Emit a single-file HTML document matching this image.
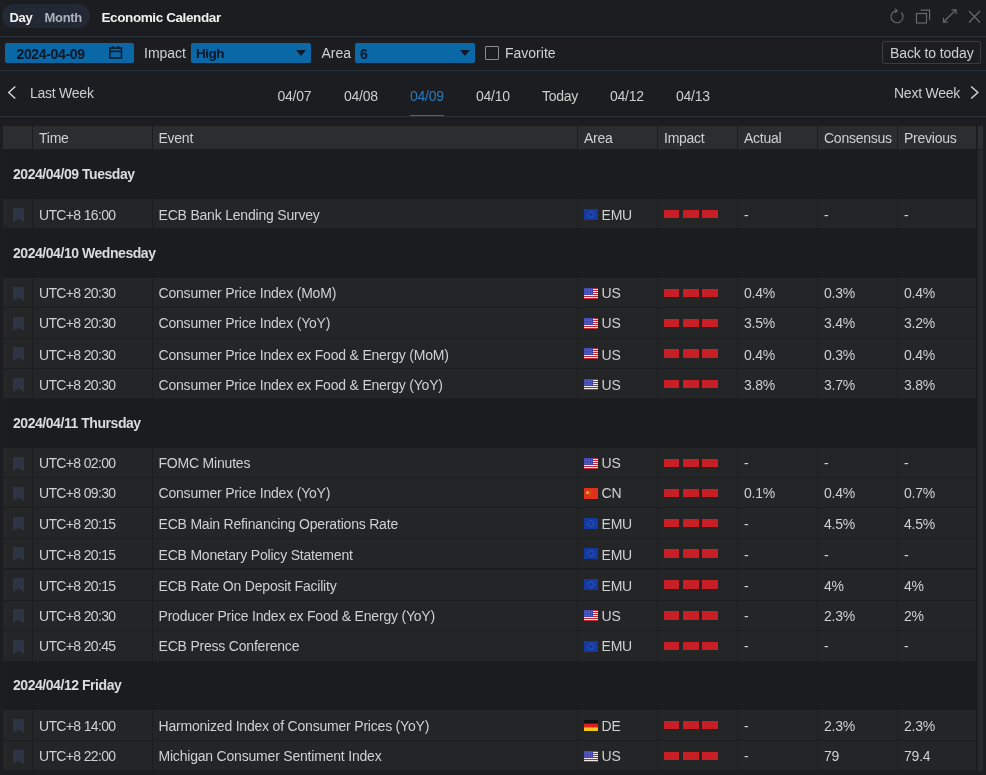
<!DOCTYPE html>
<html><head><meta charset="utf-8">
<style>
html,body{margin:0;padding:0;}
body{width:986px;height:775px;overflow:hidden;will-change:transform;background:#1c1d20;position:relative;font-family:"Liberation Sans", sans-serif;color:#d6d6d6;}
.a{position:absolute;white-space:nowrap;}
.line{position:absolute;left:0;width:986px;height:1px;background:#29313d;}
.pill{position:absolute;left:2px;top:4px;width:88px;height:24px;border-radius:12px;background:#232835;}
.tb{font-size:13px;font-weight:bold;letter-spacing:-0.3px;}
.blue{position:absolute;background:#0a68a6;border-radius:2px;height:20px;top:43px;}
.lbl{font-size:14px;color:#d0d0d0;}
.dk{color:#0a1828;font-size:13.5px;}
.tri{position:absolute;width:0;height:0;border-left:5px solid transparent;border-right:5px solid transparent;border-top:6px solid #0c1a2c;}
.nav{font-size:14px;letter-spacing:-0.25px;color:#cdcdcd;}
.tbl{position:absolute;left:0;top:117px;width:986px;height:658px;}
.hc{position:absolute;top:126px;height:22.5px;background:#2c2d2f;font-size:14px;letter-spacing:-0.25px;color:#cfcfcf;line-height:25px;box-sizing:border-box;padding-left:6px;}
.hc:first-child{}
.gh{position:absolute;left:3px;width:973px;background:#1b1c1e;font-size:14px;letter-spacing:-0.45px;font-weight:bold;color:#dcdcdc;padding-left:10px;box-sizing:border-box;}
.c{position:absolute;background:#242527;font-size:14px;letter-spacing:-0.2px;color:#d0d0d0;line-height:32px;box-sizing:border-box;padding-left:6px;white-space:nowrap;}
.c0{padding-left:0;}
.c1{letter-spacing:-0.65px;}
.bk{position:absolute;left:10px;top:8.5px;}
.flag{position:absolute;left:5.5px;top:9.5px;}
.ar{position:absolute;left:23.5px;}
.t{position:relative;}
.bars{position:absolute;left:6px;top:10.5px;height:8.5px;}
.bars i{position:absolute;top:0;height:8.5px;width:15px;background:#c81e26;}
.bars i:nth-child(1){left:0;}
.bars i:nth-child(2){left:18.5px;width:16px;}
.bars i:nth-child(3){left:37.5px;width:16px;}
.sb{position:absolute;left:977.5px;top:150px;width:5px;height:621px;background:#27292b;}
.sbt{position:absolute;left:977.5px;top:126px;width:5px;height:23px;background:#2c2e30;}
</style></head><body>
<div class="pill"></div>
<div class="a tb" style="left:9.5px;top:10px;color:#f4f4f4;">Day</div>
<div class="a tb" style="left:44.5px;top:10px;color:#aeb2ba;">Month</div>
<div class="a" style="left:101.5px;top:9.6px;font-size:13.5px;letter-spacing:-0.4px;font-weight:bold;color:#f0f0f0;">Economic Calendar</div>
<svg class="a" style="left:885px;top:5px" width="101" height="26" viewBox="885 5 101 26" fill="none" stroke="#66686c" stroke-width="1.2">
  <path d="M901.24 12.46 A6 6 0 1 1 897 10.7"/><path d="M895 8.6 L897.3 10.7 L895 12.8"/>
  <rect x="916.5" y="13.5" width="10" height="9.5"/><path d="M920.5 10.2 H929.6 V19.8"/>
  <path d="M943.5 22 L956 9.8"/><path d="M943.5 17.8 V22.2 H947.8"/><path d="M951.6 9.8 H956 V14.2"/>
  <path d="M969 11 L980 22.5 M980 11 L969 22.5"/>
</svg>
<div class="line" style="top:36px"></div>
<div class="blue" style="left:5px;width:129px;"></div>
<div class="a dk" style="left:16.5px;top:45.5px;font-weight:bold;font-size:14px;letter-spacing:-0.35px;">2024-04-09</div>
<svg class="a" style="left:109px;top:46px" width="14" height="13" viewBox="0 0 14 13" fill="none" stroke="#08131f" stroke-width="1.4"><rect x="0.9" y="2" width="11.6" height="10"/><path d="M1 5.4H12.5" stroke-width="1.5"/><path d="M4 0V2.5M9.5 0V2.5"/></svg>
<div class="a lbl" style="left:144px;top:45px;">Impact</div>
<div class="blue" style="left:191px;width:120px;"></div>
<div class="a dk" style="left:196px;top:45.5px;font-weight:bold;font-size:13.5px;letter-spacing:-0.5px;">High</div>
<div class="tri" style="left:296px;top:50px;"></div>
<div class="a lbl" style="left:321.5px;top:45px;">Area</div>
<div class="blue" style="left:355px;width:120px;"></div>
<div class="a dk" style="left:360px;top:45.5px;font-weight:bold;font-size:14px;">6</div>
<div class="tri" style="left:459.5px;top:50px;"></div>
<div class="a" style="left:485px;top:46px;width:12px;height:12px;border:1.3px solid #8a8c90;border-radius:1px;"></div>
<div class="a lbl" style="left:505px;top:45px;">Favorite</div>
<div class="a" style="left:881.5px;top:41px;width:97px;height:21px;border:1px solid #3a3c40;border-radius:2px;"></div>
<div class="a lbl" style="left:890px;top:45px;letter-spacing:-0.1px;">Back to today</div>
<div class="line" style="top:70px"></div>
<svg class="a" style="left:6px;top:85px" width="12" height="15" viewBox="0 0 12 15" fill="none" stroke="#d8d8d8" stroke-width="1.4"><path d="M9.3 1.6L2.7 7.5L9.3 13.4"/></svg>
<div class="a nav" style="left:30px;top:85px;">Last Week</div>
<div class="a nav" style="left:277.5px;top:87.5px;">04/07</div>
<div class="a nav" style="left:344px;top:87.5px;">04/08</div>
<div class="a nav" style="left:410px;top:87.5px;color:#2b7bb9;">04/09</div>
<div class="a" style="left:409.5px;top:115px;width:34.5px;height:2px;background:#1a6fab;"></div>
<div class="a nav" style="left:476px;top:87.5px;">04/10</div>
<div class="a nav" style="left:542px;top:87.5px;">Today</div>
<div class="a nav" style="left:610px;top:87.5px;">04/12</div>
<div class="a nav" style="left:676px;top:87.5px;">04/13</div>
<div class="a nav" style="left:894px;top:85px;">Next Week</div>
<svg class="a" style="left:968px;top:85px" width="12" height="15" viewBox="0 0 12 15" fill="none" stroke="#d8d8d8" stroke-width="1.4"><path d="M3.2 1.6L9.8 7.5L3.2 13.4"/></svg>
<div class="line" style="top:116px"></div>
<div class="hc" style="left:3px;width:29px"></div>
<div class="hc" style="left:33px;width:118.5px">Time</div>
<div class="hc" style="left:152.5px;width:424.0px">Event</div>
<div class="hc" style="left:578px;width:78.5px">Area</div>
<div class="hc" style="left:658px;width:78.5px">Impact</div>
<div class="hc" style="left:738px;width:78.5px">Actual</div>
<div class="hc" style="left:818px;width:78.5px">Consensus</div>
<div class="hc" style="left:898px;width:78px">Previous</div>
<div class="gh" style="top:150px;height:48px;line-height:48px"><span class="t" style="top:-0.4px">2024/04/09 Tuesday</span></div>
<div class="c c0" style="left:3px;top:199px;width:29px;height:29px"><svg class="bk" width="11" height="14" viewBox="0 0 11 14"><path d="M0 0H11V14.2L5.5 10.8L0 14.2Z" fill="#2d3443"/></svg></div>
<div class="c c1" style="left:33px;top:199px;width:118.5px;height:29px"><span class="t" style="top:0.0px">UTC+8 16:00</span></div>
<div class="c c2" style="left:152.5px;top:199px;width:424.0px;height:29px"><span class="t" style="top:0.0px">ECB Bank Lending Survey</span></div>
<div class="c c3" style="left:578px;top:199px;width:78.5px;height:29px"><svg class="flag" width="14" height="11" viewBox="0 0 14 11"><rect width="14" height="11" fill="#123aa0"/><circle cx="7" cy="5.5" r="3" fill="none" stroke="#6a7fc8" stroke-width="0.8" stroke-dasharray="0.8 0.8"/></svg><span class="ar" style="top:0.0px">EMU</span></div>
<div class="c c4" style="left:658px;top:199px;width:78.5px;height:29px"><div class="bars"><i></i><i></i><i></i></div></div>
<div class="c c5" style="left:738px;top:199px;width:78.5px;height:29px"><span class="t" style="top:0.0px">-</span></div>
<div class="c c6" style="left:818px;top:199px;width:78.5px;height:29px"><span class="t" style="top:0.0px">-</span></div>
<div class="c c7" style="left:898px;top:199px;width:78px;height:29px"><span class="t" style="top:0.0px">-</span></div>
<div class="gh" style="top:229.5px;height:47.5px;line-height:48px"><span class="t" style="top:-0.6px">2024/04/10 Wednesday</span></div>
<div class="c c0" style="left:3px;top:278px;width:29px;height:29px"><svg class="bk" width="11" height="14" viewBox="0 0 11 14"><path d="M0 0H11V14.2L5.5 10.8L0 14.2Z" fill="#2d3443"/></svg></div>
<div class="c c1" style="left:33px;top:278px;width:118.5px;height:29px"><span class="t" style="top:-0.7px">UTC+8 20:30</span></div>
<div class="c c2" style="left:152.5px;top:278px;width:424.0px;height:29px"><span class="t" style="top:-0.7px">Consumer Price Index (MoM)</span></div>
<div class="c c3" style="left:578px;top:278px;width:78.5px;height:29px"><svg class="flag" width="14" height="11" viewBox="0 0 14 11"><rect width="14" height="11" fill="#f3e4e8"/><rect x="0" y="0" width="14" height="1" fill="#b82a34"/><rect x="0" y="2" width="14" height="1" fill="#b82a34"/><rect x="0" y="4" width="14" height="1" fill="#b82a34"/><rect x="0" y="6" width="14" height="1" fill="#b82a34"/><rect x="0" y="8" width="14" height="1" fill="#b82a34"/><rect x="0" y="10" width="14" height="1" fill="#b82a34"/><rect width="9" height="7" fill="#3d44b0"/><circle cx="1.0" cy="1.0" r="0.35" fill="#c8ccf0"/><circle cx="1.0" cy="2.5" r="0.35" fill="#c8ccf0"/><circle cx="1.0" cy="4.0" r="0.35" fill="#c8ccf0"/><circle cx="1.0" cy="5.5" r="0.35" fill="#c8ccf0"/><circle cx="2.6" cy="1.0" r="0.35" fill="#c8ccf0"/><circle cx="2.6" cy="2.5" r="0.35" fill="#c8ccf0"/><circle cx="2.6" cy="4.0" r="0.35" fill="#c8ccf0"/><circle cx="2.6" cy="5.5" r="0.35" fill="#c8ccf0"/><circle cx="4.2" cy="1.0" r="0.35" fill="#c8ccf0"/><circle cx="4.2" cy="2.5" r="0.35" fill="#c8ccf0"/><circle cx="4.2" cy="4.0" r="0.35" fill="#c8ccf0"/><circle cx="4.2" cy="5.5" r="0.35" fill="#c8ccf0"/><circle cx="5.8" cy="1.0" r="0.35" fill="#c8ccf0"/><circle cx="5.8" cy="2.5" r="0.35" fill="#c8ccf0"/><circle cx="5.8" cy="4.0" r="0.35" fill="#c8ccf0"/><circle cx="5.8" cy="5.5" r="0.35" fill="#c8ccf0"/><circle cx="7.4" cy="1.0" r="0.35" fill="#c8ccf0"/><circle cx="7.4" cy="2.5" r="0.35" fill="#c8ccf0"/><circle cx="7.4" cy="4.0" r="0.35" fill="#c8ccf0"/><circle cx="7.4" cy="5.5" r="0.35" fill="#c8ccf0"/></svg><span class="ar" style="top:-0.7px">US</span></div>
<div class="c c4" style="left:658px;top:278px;width:78.5px;height:29px"><div class="bars"><i></i><i></i><i></i></div></div>
<div class="c c5" style="left:738px;top:278px;width:78.5px;height:29px"><span class="t" style="top:-0.7px">0.4%</span></div>
<div class="c c6" style="left:818px;top:278px;width:78.5px;height:29px"><span class="t" style="top:-0.7px">0.3%</span></div>
<div class="c c7" style="left:898px;top:278px;width:78px;height:29px"><span class="t" style="top:-0.7px">0.4%</span></div>
<div class="c c0" style="left:3px;top:308px;width:29px;height:29.5px"><svg class="bk" width="11" height="14" viewBox="0 0 11 14"><path d="M0 0H11V14.2L5.5 10.8L0 14.2Z" fill="#2d3443"/></svg></div>
<div class="c c1" style="left:33px;top:308px;width:118.5px;height:29.5px"><span class="t" style="top:-0.7px">UTC+8 20:30</span></div>
<div class="c c2" style="left:152.5px;top:308px;width:424.0px;height:29.5px"><span class="t" style="top:-0.7px">Consumer Price Index (YoY)</span></div>
<div class="c c3" style="left:578px;top:308px;width:78.5px;height:29.5px"><svg class="flag" width="14" height="11" viewBox="0 0 14 11"><rect width="14" height="11" fill="#f3e4e8"/><rect x="0" y="0" width="14" height="1" fill="#b82a34"/><rect x="0" y="2" width="14" height="1" fill="#b82a34"/><rect x="0" y="4" width="14" height="1" fill="#b82a34"/><rect x="0" y="6" width="14" height="1" fill="#b82a34"/><rect x="0" y="8" width="14" height="1" fill="#b82a34"/><rect x="0" y="10" width="14" height="1" fill="#b82a34"/><rect width="9" height="7" fill="#3d44b0"/><circle cx="1.0" cy="1.0" r="0.35" fill="#c8ccf0"/><circle cx="1.0" cy="2.5" r="0.35" fill="#c8ccf0"/><circle cx="1.0" cy="4.0" r="0.35" fill="#c8ccf0"/><circle cx="1.0" cy="5.5" r="0.35" fill="#c8ccf0"/><circle cx="2.6" cy="1.0" r="0.35" fill="#c8ccf0"/><circle cx="2.6" cy="2.5" r="0.35" fill="#c8ccf0"/><circle cx="2.6" cy="4.0" r="0.35" fill="#c8ccf0"/><circle cx="2.6" cy="5.5" r="0.35" fill="#c8ccf0"/><circle cx="4.2" cy="1.0" r="0.35" fill="#c8ccf0"/><circle cx="4.2" cy="2.5" r="0.35" fill="#c8ccf0"/><circle cx="4.2" cy="4.0" r="0.35" fill="#c8ccf0"/><circle cx="4.2" cy="5.5" r="0.35" fill="#c8ccf0"/><circle cx="5.8" cy="1.0" r="0.35" fill="#c8ccf0"/><circle cx="5.8" cy="2.5" r="0.35" fill="#c8ccf0"/><circle cx="5.8" cy="4.0" r="0.35" fill="#c8ccf0"/><circle cx="5.8" cy="5.5" r="0.35" fill="#c8ccf0"/><circle cx="7.4" cy="1.0" r="0.35" fill="#c8ccf0"/><circle cx="7.4" cy="2.5" r="0.35" fill="#c8ccf0"/><circle cx="7.4" cy="4.0" r="0.35" fill="#c8ccf0"/><circle cx="7.4" cy="5.5" r="0.35" fill="#c8ccf0"/></svg><span class="ar" style="top:-0.7px">US</span></div>
<div class="c c4" style="left:658px;top:308px;width:78.5px;height:29.5px"><div class="bars"><i></i><i></i><i></i></div></div>
<div class="c c5" style="left:738px;top:308px;width:78.5px;height:29.5px"><span class="t" style="top:-0.7px">3.5%</span></div>
<div class="c c6" style="left:818px;top:308px;width:78.5px;height:29.5px"><span class="t" style="top:-0.7px">3.4%</span></div>
<div class="c c7" style="left:898px;top:308px;width:78px;height:29.5px"><span class="t" style="top:-0.7px">3.2%</span></div>
<div class="c c0" style="left:3px;top:338.5px;width:29px;height:29.5px"><svg class="bk" width="11" height="14" viewBox="0 0 11 14"><path d="M0 0H11V14.2L5.5 10.8L0 14.2Z" fill="#2d3443"/></svg></div>
<div class="c c1" style="left:33px;top:338.5px;width:118.5px;height:29.5px"><span class="t" style="top:0.5px">UTC+8 20:30</span></div>
<div class="c c2" style="left:152.5px;top:338.5px;width:424.0px;height:29.5px"><span class="t" style="top:0.5px">Consumer Price Index ex Food &amp; Energy (MoM)</span></div>
<div class="c c3" style="left:578px;top:338.5px;width:78.5px;height:29.5px"><svg class="flag" width="14" height="11" viewBox="0 0 14 11"><rect width="14" height="11" fill="#f3e4e8"/><rect x="0" y="0" width="14" height="1" fill="#b82a34"/><rect x="0" y="2" width="14" height="1" fill="#b82a34"/><rect x="0" y="4" width="14" height="1" fill="#b82a34"/><rect x="0" y="6" width="14" height="1" fill="#b82a34"/><rect x="0" y="8" width="14" height="1" fill="#b82a34"/><rect x="0" y="10" width="14" height="1" fill="#b82a34"/><rect width="9" height="7" fill="#3d44b0"/><circle cx="1.0" cy="1.0" r="0.35" fill="#c8ccf0"/><circle cx="1.0" cy="2.5" r="0.35" fill="#c8ccf0"/><circle cx="1.0" cy="4.0" r="0.35" fill="#c8ccf0"/><circle cx="1.0" cy="5.5" r="0.35" fill="#c8ccf0"/><circle cx="2.6" cy="1.0" r="0.35" fill="#c8ccf0"/><circle cx="2.6" cy="2.5" r="0.35" fill="#c8ccf0"/><circle cx="2.6" cy="4.0" r="0.35" fill="#c8ccf0"/><circle cx="2.6" cy="5.5" r="0.35" fill="#c8ccf0"/><circle cx="4.2" cy="1.0" r="0.35" fill="#c8ccf0"/><circle cx="4.2" cy="2.5" r="0.35" fill="#c8ccf0"/><circle cx="4.2" cy="4.0" r="0.35" fill="#c8ccf0"/><circle cx="4.2" cy="5.5" r="0.35" fill="#c8ccf0"/><circle cx="5.8" cy="1.0" r="0.35" fill="#c8ccf0"/><circle cx="5.8" cy="2.5" r="0.35" fill="#c8ccf0"/><circle cx="5.8" cy="4.0" r="0.35" fill="#c8ccf0"/><circle cx="5.8" cy="5.5" r="0.35" fill="#c8ccf0"/><circle cx="7.4" cy="1.0" r="0.35" fill="#c8ccf0"/><circle cx="7.4" cy="2.5" r="0.35" fill="#c8ccf0"/><circle cx="7.4" cy="4.0" r="0.35" fill="#c8ccf0"/><circle cx="7.4" cy="5.5" r="0.35" fill="#c8ccf0"/></svg><span class="ar" style="top:0.5px">US</span></div>
<div class="c c4" style="left:658px;top:338.5px;width:78.5px;height:29.5px"><div class="bars"><i></i><i></i><i></i></div></div>
<div class="c c5" style="left:738px;top:338.5px;width:78.5px;height:29.5px"><span class="t" style="top:0.5px">0.4%</span></div>
<div class="c c6" style="left:818px;top:338.5px;width:78.5px;height:29.5px"><span class="t" style="top:0.5px">0.3%</span></div>
<div class="c c7" style="left:898px;top:338.5px;width:78px;height:29.5px"><span class="t" style="top:0.5px">0.4%</span></div>
<div class="c c0" style="left:3px;top:369px;width:29px;height:29px"><svg class="bk" width="11" height="14" viewBox="0 0 11 14"><path d="M0 0H11V14.2L5.5 10.8L0 14.2Z" fill="#2d3443"/></svg></div>
<div class="c c1" style="left:33px;top:369px;width:118.5px;height:29px"><span class="t" style="top:0.0px">UTC+8 20:30</span></div>
<div class="c c2" style="left:152.5px;top:369px;width:424.0px;height:29px"><span class="t" style="top:0.0px">Consumer Price Index ex Food &amp; Energy (YoY)</span></div>
<div class="c c3" style="left:578px;top:369px;width:78.5px;height:29px"><svg class="flag" width="14" height="11" viewBox="0 0 14 11"><rect width="14" height="11" fill="#f3e4e8"/><rect x="0" y="0" width="14" height="1" fill="#b82a34"/><rect x="0" y="2" width="14" height="1" fill="#b82a34"/><rect x="0" y="4" width="14" height="1" fill="#b82a34"/><rect x="0" y="6" width="14" height="1" fill="#b82a34"/><rect x="0" y="8" width="14" height="1" fill="#b82a34"/><rect x="0" y="10" width="14" height="1" fill="#b82a34"/><rect width="9" height="7" fill="#3d44b0"/><circle cx="1.0" cy="1.0" r="0.35" fill="#c8ccf0"/><circle cx="1.0" cy="2.5" r="0.35" fill="#c8ccf0"/><circle cx="1.0" cy="4.0" r="0.35" fill="#c8ccf0"/><circle cx="1.0" cy="5.5" r="0.35" fill="#c8ccf0"/><circle cx="2.6" cy="1.0" r="0.35" fill="#c8ccf0"/><circle cx="2.6" cy="2.5" r="0.35" fill="#c8ccf0"/><circle cx="2.6" cy="4.0" r="0.35" fill="#c8ccf0"/><circle cx="2.6" cy="5.5" r="0.35" fill="#c8ccf0"/><circle cx="4.2" cy="1.0" r="0.35" fill="#c8ccf0"/><circle cx="4.2" cy="2.5" r="0.35" fill="#c8ccf0"/><circle cx="4.2" cy="4.0" r="0.35" fill="#c8ccf0"/><circle cx="4.2" cy="5.5" r="0.35" fill="#c8ccf0"/><circle cx="5.8" cy="1.0" r="0.35" fill="#c8ccf0"/><circle cx="5.8" cy="2.5" r="0.35" fill="#c8ccf0"/><circle cx="5.8" cy="4.0" r="0.35" fill="#c8ccf0"/><circle cx="5.8" cy="5.5" r="0.35" fill="#c8ccf0"/><circle cx="7.4" cy="1.0" r="0.35" fill="#c8ccf0"/><circle cx="7.4" cy="2.5" r="0.35" fill="#c8ccf0"/><circle cx="7.4" cy="4.0" r="0.35" fill="#c8ccf0"/><circle cx="7.4" cy="5.5" r="0.35" fill="#c8ccf0"/></svg><span class="ar" style="top:0.0px">US</span></div>
<div class="c c4" style="left:658px;top:369px;width:78.5px;height:29px"><div class="bars"><i></i><i></i><i></i></div></div>
<div class="c c5" style="left:738px;top:369px;width:78.5px;height:29px"><span class="t" style="top:0.0px">3.8%</span></div>
<div class="c c6" style="left:818px;top:369px;width:78.5px;height:29px"><span class="t" style="top:0.0px">3.7%</span></div>
<div class="c c7" style="left:898px;top:369px;width:78px;height:29px"><span class="t" style="top:0.0px">3.8%</span></div>
<div class="gh" style="top:400px;height:47px;line-height:48px"><span class="t" style="top:-1.1px">2024/04/11 Thursday</span></div>
<div class="c c0" style="left:3px;top:448px;width:29px;height:29px"><svg class="bk" width="11" height="14" viewBox="0 0 11 14"><path d="M0 0H11V14.2L5.5 10.8L0 14.2Z" fill="#2d3443"/></svg></div>
<div class="c c1" style="left:33px;top:448px;width:118.5px;height:29px"><span class="t" style="top:-0.7px">UTC+8 02:00</span></div>
<div class="c c2" style="left:152.5px;top:448px;width:424.0px;height:29px"><span class="t" style="top:-0.7px">FOMC Minutes</span></div>
<div class="c c3" style="left:578px;top:448px;width:78.5px;height:29px"><svg class="flag" width="14" height="11" viewBox="0 0 14 11"><rect width="14" height="11" fill="#f3e4e8"/><rect x="0" y="0" width="14" height="1" fill="#b82a34"/><rect x="0" y="2" width="14" height="1" fill="#b82a34"/><rect x="0" y="4" width="14" height="1" fill="#b82a34"/><rect x="0" y="6" width="14" height="1" fill="#b82a34"/><rect x="0" y="8" width="14" height="1" fill="#b82a34"/><rect x="0" y="10" width="14" height="1" fill="#b82a34"/><rect width="9" height="7" fill="#3d44b0"/><circle cx="1.0" cy="1.0" r="0.35" fill="#c8ccf0"/><circle cx="1.0" cy="2.5" r="0.35" fill="#c8ccf0"/><circle cx="1.0" cy="4.0" r="0.35" fill="#c8ccf0"/><circle cx="1.0" cy="5.5" r="0.35" fill="#c8ccf0"/><circle cx="2.6" cy="1.0" r="0.35" fill="#c8ccf0"/><circle cx="2.6" cy="2.5" r="0.35" fill="#c8ccf0"/><circle cx="2.6" cy="4.0" r="0.35" fill="#c8ccf0"/><circle cx="2.6" cy="5.5" r="0.35" fill="#c8ccf0"/><circle cx="4.2" cy="1.0" r="0.35" fill="#c8ccf0"/><circle cx="4.2" cy="2.5" r="0.35" fill="#c8ccf0"/><circle cx="4.2" cy="4.0" r="0.35" fill="#c8ccf0"/><circle cx="4.2" cy="5.5" r="0.35" fill="#c8ccf0"/><circle cx="5.8" cy="1.0" r="0.35" fill="#c8ccf0"/><circle cx="5.8" cy="2.5" r="0.35" fill="#c8ccf0"/><circle cx="5.8" cy="4.0" r="0.35" fill="#c8ccf0"/><circle cx="5.8" cy="5.5" r="0.35" fill="#c8ccf0"/><circle cx="7.4" cy="1.0" r="0.35" fill="#c8ccf0"/><circle cx="7.4" cy="2.5" r="0.35" fill="#c8ccf0"/><circle cx="7.4" cy="4.0" r="0.35" fill="#c8ccf0"/><circle cx="7.4" cy="5.5" r="0.35" fill="#c8ccf0"/></svg><span class="ar" style="top:-0.7px">US</span></div>
<div class="c c4" style="left:658px;top:448px;width:78.5px;height:29px"><div class="bars"><i></i><i></i><i></i></div></div>
<div class="c c5" style="left:738px;top:448px;width:78.5px;height:29px"><span class="t" style="top:-0.7px">-</span></div>
<div class="c c6" style="left:818px;top:448px;width:78.5px;height:29px"><span class="t" style="top:-0.7px">-</span></div>
<div class="c c7" style="left:898px;top:448px;width:78px;height:29px"><span class="t" style="top:-0.7px">-</span></div>
<div class="c c0" style="left:3px;top:478px;width:29px;height:29.3px"><svg class="bk" width="11" height="14" viewBox="0 0 11 14"><path d="M0 0H11V14.2L5.5 10.8L0 14.2Z" fill="#2d3443"/></svg></div>
<div class="c c1" style="left:33px;top:478px;width:118.5px;height:29.3px"><span class="t" style="top:-0.7px">UTC+8 09:30</span></div>
<div class="c c2" style="left:152.5px;top:478px;width:424.0px;height:29.3px"><span class="t" style="top:-0.7px">Consumer Price Index (YoY)</span></div>
<div class="c c3" style="left:578px;top:478px;width:78.5px;height:29.3px"><svg class="flag" width="14" height="11" viewBox="0 0 14 11"><rect width="14" height="11" fill="#e0301e"/><circle cx="3.5" cy="4.5" r="1.5" fill="#f5b020"/><circle cx="6" cy="2.5" r="0.5" fill="#f08030"/><circle cx="6.5" cy="4.5" r="0.5" fill="#f08030"/><circle cx="6" cy="6.5" r="0.5" fill="#f08030"/></svg><span class="ar" style="top:-0.7px">CN</span></div>
<div class="c c4" style="left:658px;top:478px;width:78.5px;height:29.3px"><div class="bars"><i></i><i></i><i></i></div></div>
<div class="c c5" style="left:738px;top:478px;width:78.5px;height:29.3px"><span class="t" style="top:-0.7px">0.1%</span></div>
<div class="c c6" style="left:818px;top:478px;width:78.5px;height:29.3px"><span class="t" style="top:-0.7px">0.4%</span></div>
<div class="c c7" style="left:898px;top:478px;width:78px;height:29.3px"><span class="t" style="top:-0.7px">0.7%</span></div>
<div class="c c0" style="left:3px;top:508.3px;width:29px;height:29.4px"><svg class="bk" width="11" height="14" viewBox="0 0 11 14"><path d="M0 0H11V14.2L5.5 10.8L0 14.2Z" fill="#2d3443"/></svg></div>
<div class="c c1" style="left:33px;top:508.3px;width:118.5px;height:29.4px"><span class="t" style="top:0.2px">UTC+8 20:15</span></div>
<div class="c c2" style="left:152.5px;top:508.3px;width:424.0px;height:29.4px"><span class="t" style="top:0.2px">ECB Main Refinancing Operations Rate</span></div>
<div class="c c3" style="left:578px;top:508.3px;width:78.5px;height:29.4px"><svg class="flag" width="14" height="11" viewBox="0 0 14 11"><rect width="14" height="11" fill="#123aa0"/><circle cx="7" cy="5.5" r="3" fill="none" stroke="#6a7fc8" stroke-width="0.8" stroke-dasharray="0.8 0.8"/></svg><span class="ar" style="top:0.2px">EMU</span></div>
<div class="c c4" style="left:658px;top:508.3px;width:78.5px;height:29.4px"><div class="bars"><i></i><i></i><i></i></div></div>
<div class="c c5" style="left:738px;top:508.3px;width:78.5px;height:29.4px"><span class="t" style="top:0.2px">-</span></div>
<div class="c c6" style="left:818px;top:508.3px;width:78.5px;height:29.4px"><span class="t" style="top:0.2px">4.5%</span></div>
<div class="c c7" style="left:898px;top:508.3px;width:78px;height:29.4px"><span class="t" style="top:0.2px">4.5%</span></div>
<div class="c c0" style="left:3px;top:538.7px;width:29px;height:29.8px"><svg class="bk" width="11" height="14" viewBox="0 0 11 14"><path d="M0 0H11V14.2L5.5 10.8L0 14.2Z" fill="#2d3443"/></svg></div>
<div class="c c1" style="left:33px;top:538.7px;width:118.5px;height:29.8px"><span class="t" style="top:0.3px">UTC+8 20:15</span></div>
<div class="c c2" style="left:152.5px;top:538.7px;width:424.0px;height:29.8px"><span class="t" style="top:0.3px">ECB Monetary Policy Statement</span></div>
<div class="c c3" style="left:578px;top:538.7px;width:78.5px;height:29.8px"><svg class="flag" width="14" height="11" viewBox="0 0 14 11"><rect width="14" height="11" fill="#123aa0"/><circle cx="7" cy="5.5" r="3" fill="none" stroke="#6a7fc8" stroke-width="0.8" stroke-dasharray="0.8 0.8"/></svg><span class="ar" style="top:0.3px">EMU</span></div>
<div class="c c4" style="left:658px;top:538.7px;width:78.5px;height:29.8px"><div class="bars"><i></i><i></i><i></i></div></div>
<div class="c c5" style="left:738px;top:538.7px;width:78.5px;height:29.8px"><span class="t" style="top:0.3px">-</span></div>
<div class="c c6" style="left:818px;top:538.7px;width:78.5px;height:29.8px"><span class="t" style="top:0.3px">-</span></div>
<div class="c c7" style="left:898px;top:538.7px;width:78px;height:29.8px"><span class="t" style="top:0.3px">-</span></div>
<div class="c c0" style="left:3px;top:569.5px;width:29px;height:30.0px"><svg class="bk" width="11" height="14" viewBox="0 0 11 14"><path d="M0 0H11V14.2L5.5 10.8L0 14.2Z" fill="#2d3443"/></svg></div>
<div class="c c1" style="left:33px;top:569.5px;width:118.5px;height:30.0px"><span class="t" style="top:0.3px">UTC+8 20:15</span></div>
<div class="c c2" style="left:152.5px;top:569.5px;width:424.0px;height:30.0px"><span class="t" style="top:0.3px">ECB Rate On Deposit Facility</span></div>
<div class="c c3" style="left:578px;top:569.5px;width:78.5px;height:30.0px"><svg class="flag" width="14" height="11" viewBox="0 0 14 11"><rect width="14" height="11" fill="#123aa0"/><circle cx="7" cy="5.5" r="3" fill="none" stroke="#6a7fc8" stroke-width="0.8" stroke-dasharray="0.8 0.8"/></svg><span class="ar" style="top:0.3px">EMU</span></div>
<div class="c c4" style="left:658px;top:569.5px;width:78.5px;height:30.0px"><div class="bars"><i></i><i></i><i></i></div></div>
<div class="c c5" style="left:738px;top:569.5px;width:78.5px;height:30.0px"><span class="t" style="top:0.3px">-</span></div>
<div class="c c6" style="left:818px;top:569.5px;width:78.5px;height:30.0px"><span class="t" style="top:0.3px">4%</span></div>
<div class="c c7" style="left:898px;top:569.5px;width:78px;height:30.0px"><span class="t" style="top:0.3px">4%</span></div>
<div class="c c0" style="left:3px;top:600.5px;width:29px;height:29.8px"><svg class="bk" width="11" height="14" viewBox="0 0 11 14"><path d="M0 0H11V14.2L5.5 10.8L0 14.2Z" fill="#2d3443"/></svg></div>
<div class="c c1" style="left:33px;top:600.5px;width:118.5px;height:29.8px"><span class="t" style="top:-0.5px">UTC+8 20:30</span></div>
<div class="c c2" style="left:152.5px;top:600.5px;width:424.0px;height:29.8px"><span class="t" style="top:-0.5px">Producer Price Index ex Food &amp; Energy (YoY)</span></div>
<div class="c c3" style="left:578px;top:600.5px;width:78.5px;height:29.8px"><svg class="flag" width="14" height="11" viewBox="0 0 14 11"><rect width="14" height="11" fill="#f3e4e8"/><rect x="0" y="0" width="14" height="1" fill="#b82a34"/><rect x="0" y="2" width="14" height="1" fill="#b82a34"/><rect x="0" y="4" width="14" height="1" fill="#b82a34"/><rect x="0" y="6" width="14" height="1" fill="#b82a34"/><rect x="0" y="8" width="14" height="1" fill="#b82a34"/><rect x="0" y="10" width="14" height="1" fill="#b82a34"/><rect width="9" height="7" fill="#3d44b0"/><circle cx="1.0" cy="1.0" r="0.35" fill="#c8ccf0"/><circle cx="1.0" cy="2.5" r="0.35" fill="#c8ccf0"/><circle cx="1.0" cy="4.0" r="0.35" fill="#c8ccf0"/><circle cx="1.0" cy="5.5" r="0.35" fill="#c8ccf0"/><circle cx="2.6" cy="1.0" r="0.35" fill="#c8ccf0"/><circle cx="2.6" cy="2.5" r="0.35" fill="#c8ccf0"/><circle cx="2.6" cy="4.0" r="0.35" fill="#c8ccf0"/><circle cx="2.6" cy="5.5" r="0.35" fill="#c8ccf0"/><circle cx="4.2" cy="1.0" r="0.35" fill="#c8ccf0"/><circle cx="4.2" cy="2.5" r="0.35" fill="#c8ccf0"/><circle cx="4.2" cy="4.0" r="0.35" fill="#c8ccf0"/><circle cx="4.2" cy="5.5" r="0.35" fill="#c8ccf0"/><circle cx="5.8" cy="1.0" r="0.35" fill="#c8ccf0"/><circle cx="5.8" cy="2.5" r="0.35" fill="#c8ccf0"/><circle cx="5.8" cy="4.0" r="0.35" fill="#c8ccf0"/><circle cx="5.8" cy="5.5" r="0.35" fill="#c8ccf0"/><circle cx="7.4" cy="1.0" r="0.35" fill="#c8ccf0"/><circle cx="7.4" cy="2.5" r="0.35" fill="#c8ccf0"/><circle cx="7.4" cy="4.0" r="0.35" fill="#c8ccf0"/><circle cx="7.4" cy="5.5" r="0.35" fill="#c8ccf0"/></svg><span class="ar" style="top:-0.5px">US</span></div>
<div class="c c4" style="left:658px;top:600.5px;width:78.5px;height:29.8px"><div class="bars"><i></i><i></i><i></i></div></div>
<div class="c c5" style="left:738px;top:600.5px;width:78.5px;height:29.8px"><span class="t" style="top:-0.5px">-</span></div>
<div class="c c6" style="left:818px;top:600.5px;width:78.5px;height:29.8px"><span class="t" style="top:-0.5px">2.3%</span></div>
<div class="c c7" style="left:898px;top:600.5px;width:78px;height:29.8px"><span class="t" style="top:-0.5px">2%</span></div>
<div class="c c0" style="left:3px;top:631.3px;width:29px;height:29.7px"><svg class="bk" width="11" height="14" viewBox="0 0 11 14"><path d="M0 0H11V14.2L5.5 10.8L0 14.2Z" fill="#2d3443"/></svg></div>
<div class="c c1" style="left:33px;top:631.3px;width:118.5px;height:29.7px"><span class="t" style="top:-1.1px">UTC+8 20:45</span></div>
<div class="c c2" style="left:152.5px;top:631.3px;width:424.0px;height:29.7px"><span class="t" style="top:-1.1px">ECB Press Conference</span></div>
<div class="c c3" style="left:578px;top:631.3px;width:78.5px;height:29.7px"><svg class="flag" width="14" height="11" viewBox="0 0 14 11"><rect width="14" height="11" fill="#123aa0"/><circle cx="7" cy="5.5" r="3" fill="none" stroke="#6a7fc8" stroke-width="0.8" stroke-dasharray="0.8 0.8"/></svg><span class="ar" style="top:-1.1px">EMU</span></div>
<div class="c c4" style="left:658px;top:631.3px;width:78.5px;height:29.7px"><div class="bars"><i></i><i></i><i></i></div></div>
<div class="c c5" style="left:738px;top:631.3px;width:78.5px;height:29.7px"><span class="t" style="top:-1.1px">-</span></div>
<div class="c c6" style="left:818px;top:631.3px;width:78.5px;height:29.7px"><span class="t" style="top:-1.1px">-</span></div>
<div class="c c7" style="left:898px;top:631.3px;width:78px;height:29.7px"><span class="t" style="top:-1.1px">-</span></div>
<div class="gh" style="top:661.5px;height:47.5px;line-height:48px"><span class="t" style="top:-0.3px">2024/04/12 Friday</span></div>
<div class="c c0" style="left:3px;top:710px;width:29px;height:30px"><svg class="bk" width="11" height="14" viewBox="0 0 11 14"><path d="M0 0H11V14.2L5.5 10.8L0 14.2Z" fill="#2d3443"/></svg></div>
<div class="c c1" style="left:33px;top:710px;width:118.5px;height:30px"><span class="t" style="top:-0.4px">UTC+8 14:00</span></div>
<div class="c c2" style="left:152.5px;top:710px;width:424.0px;height:30px"><span class="t" style="top:-0.4px">Harmonized Index of Consumer Prices (YoY)</span></div>
<div class="c c3" style="left:578px;top:710px;width:78.5px;height:30px"><svg class="flag" width="14" height="11" viewBox="0 0 14 11"><rect width="14" height="3.67" fill="#111"/><rect y="3.67" width="14" height="3.67" fill="#dd1f1f"/><rect y="7.33" width="14" height="3.67" fill="#f2c61a"/></svg><span class="ar" style="top:-0.4px">DE</span></div>
<div class="c c4" style="left:658px;top:710px;width:78.5px;height:30px"><div class="bars"><i></i><i></i><i></i></div></div>
<div class="c c5" style="left:738px;top:710px;width:78.5px;height:30px"><span class="t" style="top:-0.4px">-</span></div>
<div class="c c6" style="left:818px;top:710px;width:78.5px;height:30px"><span class="t" style="top:-0.4px">2.3%</span></div>
<div class="c c7" style="left:898px;top:710px;width:78px;height:30px"><span class="t" style="top:-0.4px">2.3%</span></div>
<div class="c c0" style="left:3px;top:741px;width:29px;height:28.5px"><svg class="bk" width="11" height="14" viewBox="0 0 11 14"><path d="M0 0H11V14.2L5.5 10.8L0 14.2Z" fill="#2d3443"/></svg></div>
<div class="c c1" style="left:33px;top:741px;width:118.5px;height:28.5px"><span class="t" style="top:-1.2px">UTC+8 22:00</span></div>
<div class="c c2" style="left:152.5px;top:741px;width:424.0px;height:28.5px"><span class="t" style="top:-1.2px">Michigan Consumer Sentiment Index</span></div>
<div class="c c3" style="left:578px;top:741px;width:78.5px;height:28.5px"><svg class="flag" width="14" height="11" viewBox="0 0 14 11"><rect width="14" height="11" fill="#f3e4e8"/><rect x="0" y="0" width="14" height="1" fill="#b82a34"/><rect x="0" y="2" width="14" height="1" fill="#b82a34"/><rect x="0" y="4" width="14" height="1" fill="#b82a34"/><rect x="0" y="6" width="14" height="1" fill="#b82a34"/><rect x="0" y="8" width="14" height="1" fill="#b82a34"/><rect x="0" y="10" width="14" height="1" fill="#b82a34"/><rect width="9" height="7" fill="#3d44b0"/><circle cx="1.0" cy="1.0" r="0.35" fill="#c8ccf0"/><circle cx="1.0" cy="2.5" r="0.35" fill="#c8ccf0"/><circle cx="1.0" cy="4.0" r="0.35" fill="#c8ccf0"/><circle cx="1.0" cy="5.5" r="0.35" fill="#c8ccf0"/><circle cx="2.6" cy="1.0" r="0.35" fill="#c8ccf0"/><circle cx="2.6" cy="2.5" r="0.35" fill="#c8ccf0"/><circle cx="2.6" cy="4.0" r="0.35" fill="#c8ccf0"/><circle cx="2.6" cy="5.5" r="0.35" fill="#c8ccf0"/><circle cx="4.2" cy="1.0" r="0.35" fill="#c8ccf0"/><circle cx="4.2" cy="2.5" r="0.35" fill="#c8ccf0"/><circle cx="4.2" cy="4.0" r="0.35" fill="#c8ccf0"/><circle cx="4.2" cy="5.5" r="0.35" fill="#c8ccf0"/><circle cx="5.8" cy="1.0" r="0.35" fill="#c8ccf0"/><circle cx="5.8" cy="2.5" r="0.35" fill="#c8ccf0"/><circle cx="5.8" cy="4.0" r="0.35" fill="#c8ccf0"/><circle cx="5.8" cy="5.5" r="0.35" fill="#c8ccf0"/><circle cx="7.4" cy="1.0" r="0.35" fill="#c8ccf0"/><circle cx="7.4" cy="2.5" r="0.35" fill="#c8ccf0"/><circle cx="7.4" cy="4.0" r="0.35" fill="#c8ccf0"/><circle cx="7.4" cy="5.5" r="0.35" fill="#c8ccf0"/></svg><span class="ar" style="top:-1.2px">US</span></div>
<div class="c c4" style="left:658px;top:741px;width:78.5px;height:28.5px"><div class="bars"><i></i><i></i><i></i></div></div>
<div class="c c5" style="left:738px;top:741px;width:78.5px;height:28.5px"><span class="t" style="top:-1.2px">-</span></div>
<div class="c c6" style="left:818px;top:741px;width:78.5px;height:28.5px"><span class="t" style="top:-1.2px">79</span></div>
<div class="c c7" style="left:898px;top:741px;width:78px;height:28.5px"><span class="t" style="top:-1.2px">79.4</span></div>
<div class="sb"></div><div class="sbt"></div>
</body></html>
